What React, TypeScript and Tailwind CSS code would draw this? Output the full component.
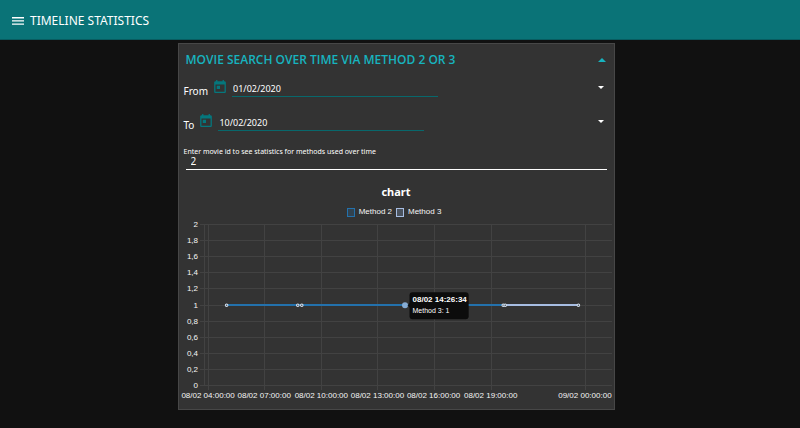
import { useState } from "react";

const xTicks = [
  { x: 29, label: "08/02 04:00:00" },
  { x: 85, label: "08/02 07:00:00" },
  { x: 142, label: "08/02 10:00:00" },
  { x: 198, label: "08/02 13:00:00" },
  { x: 254, label: "08/02 16:00:00" },
  { x: 311, label: "08/02 19:00:00" },
  { x: 405, label: "09/02 00:00:00" },
];

const yTicks = [
  { y: 4, label: "2" },
  { y: 20, label: "1,8" },
  { y: 36, label: "1,6" },
  { y: 52, label: "1,4" },
  { y: 68, label: "1,2" },
  { y: 85, label: "1" },
  { y: 101, label: "0,8" },
  { y: 117, label: "0,6" },
  { y: 133, label: "0,4" },
  { y: 149, label: "0,2" },
  { y: 165, label: "0" },
];

const points = [47, 118, 122, 323, 325, 398];

function CalendarIcon() {
  return (
    <svg viewBox="3 1 18 20" className="h-[13px] w-3 fill-[#05777d]" aria-hidden="true">
      <path d="M19 3h-1V1h-2v2H8V1H6v2H5c-1.11 0-1.99.9-1.99 2L3 19c0 1.1.89 2 2 2h14c1.1 0 2-.9 2-2V5c0-1.1-.9-2-2-2zm0 16H5V8h14v11zM7 10h5v5H7z" />
    </svg>
  );
}

function DateField({ id, label, initial }: { id: string; label: string; initial: string }) {
  const [value, setValue] = useState(initial);
  return (
    <div className="flex h-[34px] items-start pr-2 pl-[5px]">
      <label htmlFor={id} className="pt-[3px] pr-1.5 text-[10px] leading-4 text-white">
        {label}
      </label>
      <button type="button" aria-label={`Pick ${label} date`} className="mr-1.5">
        <CalendarIcon />
      </button>
      <input
        id={id}
        value={value}
        onChange={(e) => setValue(e.target.value)}
        className="h-[17px] w-[206px] border-b border-[#08686c] bg-transparent pl-px text-[9px] text-white outline-none"
      />
      <button type="button" aria-label={`Open ${label} calendar`} className="mt-1 ml-auto p-0.5">
        <svg viewBox="0 0 6 3" className="h-[3px] w-1.5 fill-white" aria-hidden="true">
          <path d="M0 0h6L3 3z" />
        </svg>
      </button>
    </div>
  );
}

function TimelineChart() {
  return (
    <svg
      viewBox="0 0 434 189"
      className="block w-full font-['Liberation_Sans',Arial,sans-serif] text-[8px]"
      role="img"
      aria-label="Movie searches per method over time"
    >
      <g className="stroke-[#424242]" shapeRendering="crispEdges">
        {yTicks.map((t) => (
          <line key={t.label} x1="21" x2="432" y1={t.y + 0.5} y2={t.y + 0.5} />
        ))}
        <line x1="25.5" x2="25.5" y1="4" y2="166" />
        {xTicks.map((t) => (
          <line key={t.label} x1={t.x + 0.5} x2={t.x + 0.5} y1="4" y2="170" />
        ))}
      </g>
      <g className="fill-[#f5f5f5]">
        {yTicks.map((t) => (
          <text key={t.label} x="19" y={t.y + 3} textAnchor="end">
            {t.label}
          </text>
        ))}
        {xTicks.map((t) => (
          <text key={t.label} x={t.x} y="178" textAnchor="middle">
            {t.label}
          </text>
        ))}
      </g>
      <rect x="47" y="84" width="278" height="2" className="fill-[#2371ac]" shapeRendering="crispEdges" />
      <rect x="325" y="84" width="73" height="2" className="fill-[#a7bde2]" shapeRendering="crispEdges" />
      {points.map((x) => (
        <circle key={x} cx={x + 0.5} cy="85" r="1.3" className="fill-[#45515c] stroke-[#d5e0ee]" />
      ))}
      <circle cx="225.5" cy="85" r="3" className="fill-[#86acd4]" />
      <path d="M228 85l3-3v6z" className="fill-[#0c0c0c]" />
      <rect x="230" y="72" width="59" height="27" rx="3" className="fill-[#0c0c0c]" />
      <text x="233" y="82" className="fill-white font-bold">
        08/02 14:26:34
      </text>
      <text x="233" y="93" className="fill-white text-[7px]">
        Method 3: 1
      </text>
    </svg>
  );
}

export default function App() {
  const [open, setOpen] = useState(true);
  const [movieId, setMovieId] = useState("2");
  return (
    <div className="min-h-screen bg-[#111111] font-['Noto_Sans','Open_Sans',sans-serif] text-white">
      <header className="flex h-10 items-center gap-1.5 border-b border-[#085c60] bg-[#0a7377] pt-0.5 pl-3">
        <button type="button" aria-label="Menu">
          <svg viewBox="0 0 12 8" className="h-2 w-3 fill-white" aria-hidden="true">
            <path d="M0 0h12v1.4H0zM0 3.2h12v1.4H0zM0 6.4h12v1.4H0z" />
          </svg>
        </button>
        <h1 className="text-xs">TIMELINE STATISTICS</h1>
      </header>
      <main className="pt-[3px] pr-2">
        <section className="mx-auto w-full max-w-[437px] border border-[#474747] bg-[#333333]">
          <button
            type="button"
            aria-expanded={open}
            onClick={() => setOpen(!open)}
            className="flex h-9 w-full items-center justify-between pr-2 pl-[7px] pb-1 text-[#17b3bf]"
          >
            <span className="font-['Open_Sans',sans-serif] text-xs font-semibold">
              MOVIE SEARCH OVER TIME VIA METHOD 2 OR 3
            </span>
            <svg viewBox="0 0 8 4" className="h-1 w-2 fill-current" aria-hidden="true">
              <path d="M0 4h8L4 0z" />
            </svg>
          </button>
          {open && (
            <>
              <DateField id="from" label="From" initial="01/02/2020" />
              <DateField id="to" label="To" initial="10/02/2020" />
              <div className="flex flex-col px-[5px]">
                <label htmlFor="movie" className="h-2 text-[7px] leading-2">
                  Enter movie id to see statistics for methods used over time
                </label>
                <input
                  id="movie"
                  value={movieId}
                  onChange={(e) => setMovieId(e.target.value)}
                  className="mr-0.5 ml-0.5 h-3.5 border-b border-white bg-transparent pb-1 pl-[5px] text-[10px] leading-3 outline-none"
                />
              </div>
              <h2 className="mt-3 text-center text-[11px] leading-5 font-bold">chart</h2>
              <div className="mt-1 flex items-center justify-center gap-1 pr-1 pb-0.5 font-['Liberation_Sans',Arial,sans-serif] text-[8px] leading-3 text-[#f5f5f5]">
                <span className="h-[9px] w-2 border border-[#2371ac] bg-[#31424f]" />
                <span>Method 2</span>
                <span className="h-[9px] w-2 border border-[#a7bde2] bg-[#4a525d]" />
                <span>Method 3</span>
              </div>
              <TimelineChart />
            </>
          )}
        </section>
      </main>
    </div>
  );
}
